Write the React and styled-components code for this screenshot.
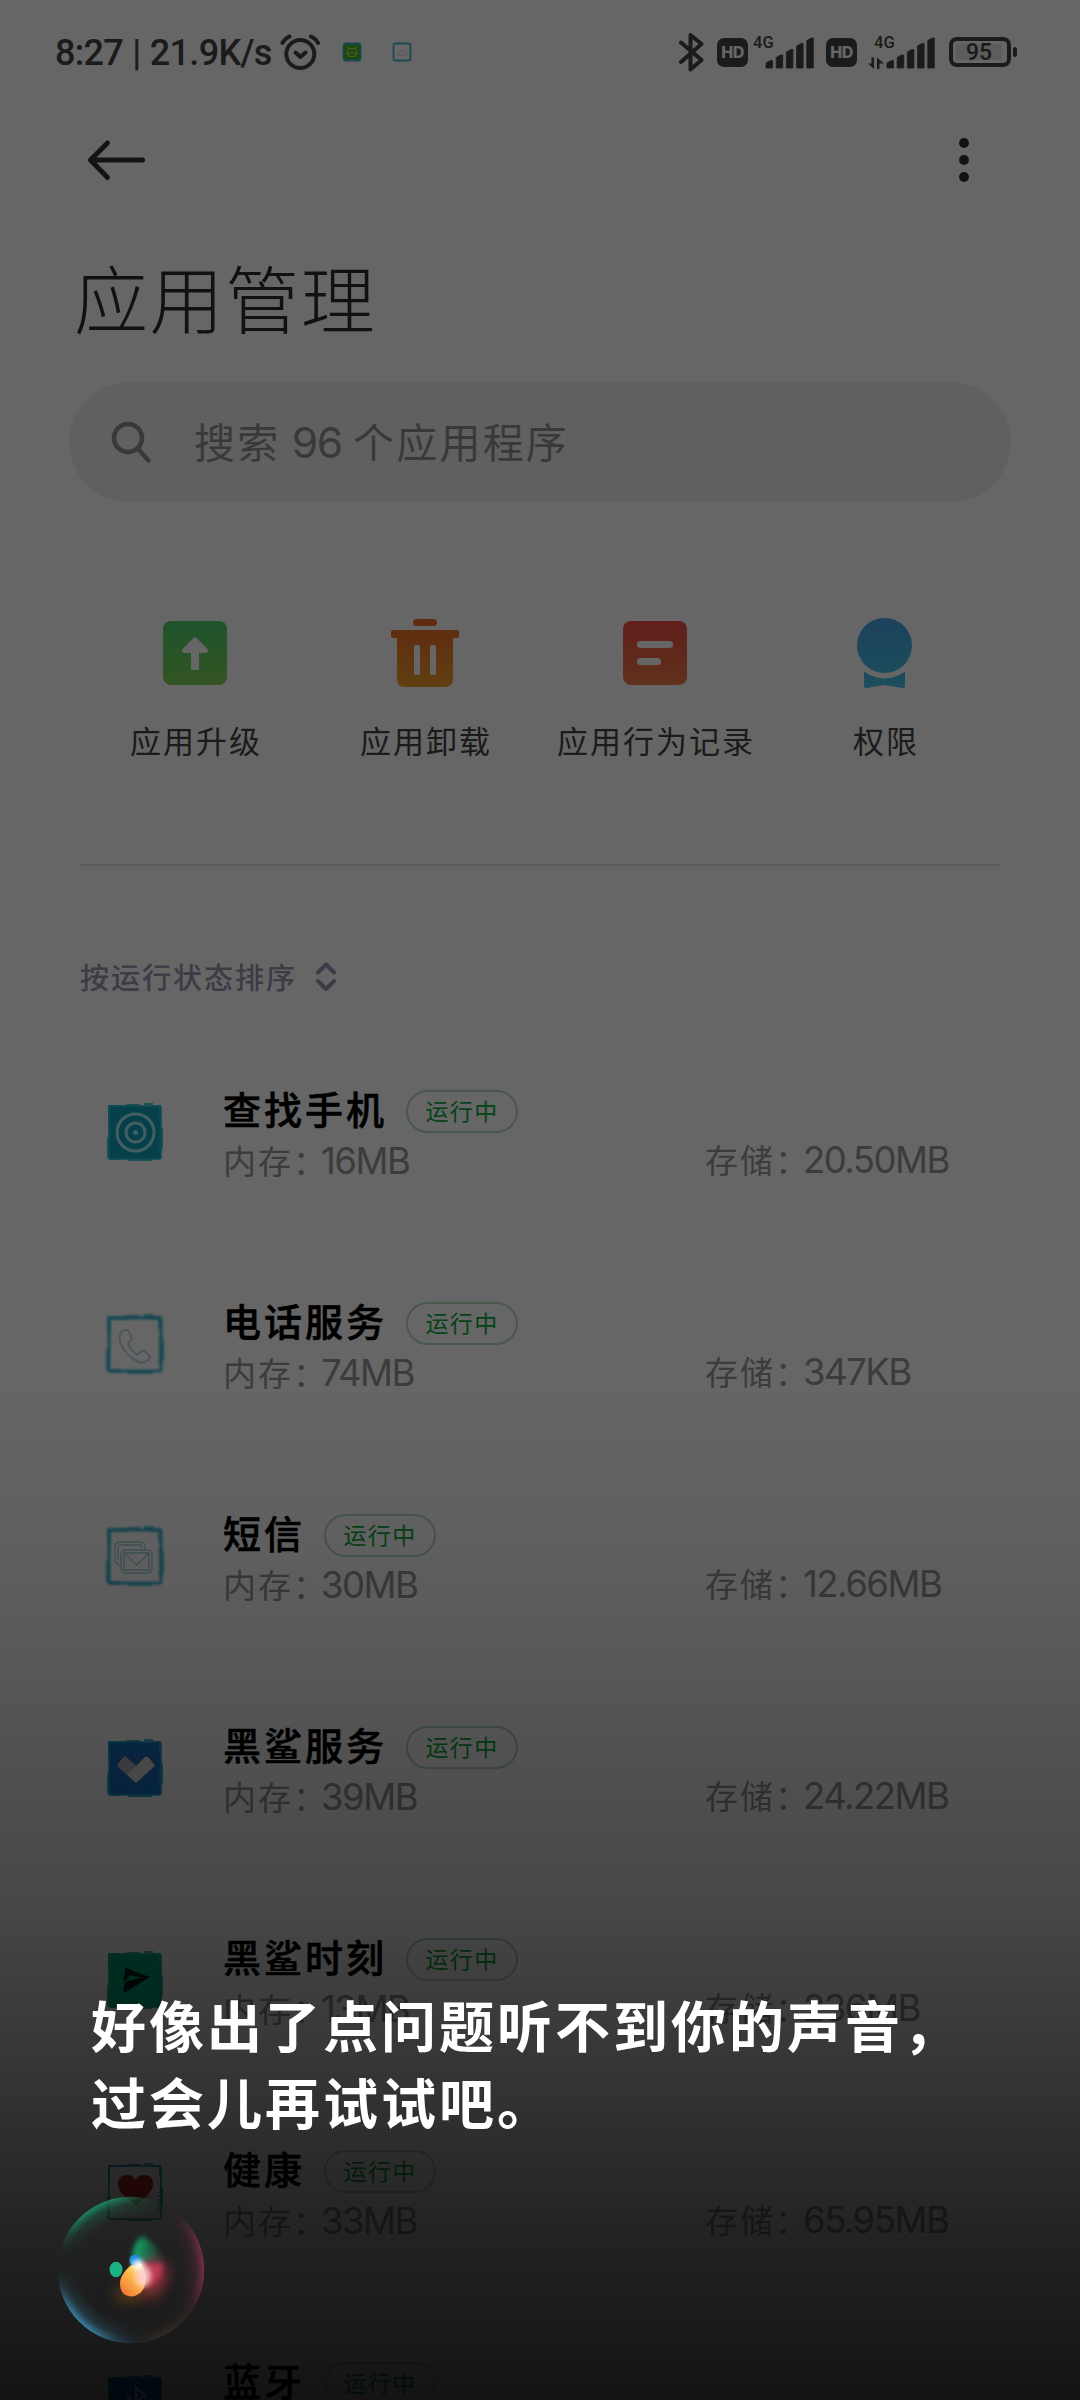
import styled, { createGlobalStyle } from 'styled-components';

const GlobalStyle = createGlobalStyle`
  * {
    box-sizing: border-box;
  }

  body {
    margin: 0;
    background-color: #fff;
    font-family: 'Noto Sans CJK SC', 'Noto Sans', sans-serif;
  }

  svg {
    display: block;
    flex-shrink: 0;
  }
`;

const Screen = styled.div`
  position: relative;
  width: 1080px;
  height: 2400px;
  overflow: hidden;
  background-color: #fff;
`;

const StatusBar = styled.div`
  display: flex;
  align-items: center;
  height: 104px;
  padding: 0 63px 0 55px;
  color: #444;
  font-family: Roboto, sans-serif;
`;

const Clock = styled.div`
  width: 225px;
  padding-top: 1px;
  font-size: 36px;
  font-weight: 500;
  line-height: 40px;
  letter-spacing: -0.7px;
  word-spacing: 1px;
  white-space: nowrap;
`;

const Notices = styled.div`
  display: flex;
  gap: 30px;
  margin-left: 22px;
`;

const StatusRight = styled.div`
  display: flex;
  align-items: center;
  margin-left: auto;
`;

const HdBadge = styled.div`
  width: 31px;
  height: 29px;
  margin: 0 ${p => p.$after}px 0 ${p => p.$before}px;
  border-radius: 7px;
  background-color: #444;
  color: #fff;
  font-family: Inter, sans-serif;
  font-size: 16px;
  font-weight: 800;
  line-height: 29px;
  letter-spacing: -0.5px;
  text-align: center;
`;

const Battery = styled.div`
  display: flex;
  align-items: center;
  margin-left: 13px;
`;

const BatteryBody = styled.div`
  width: 62px;
  height: 30px;
  padding: 3px;
  border: 4px solid #444;
  border-radius: 8px;
`;

const BatteryLevel = styled.div`
  width: 46px;
  height: 16px;
  border-radius: 2px;
  background-color: #e8e8e8;
  font-size: 23px;
  font-weight: 500;
  line-height: 17px;
  text-align: center;
`;

const BatteryTip = styled.div`
  width: 4px;
  height: 10px;
  margin-left: 2px;
  border-radius: 2px;
  background-color: #444;
`;

const Toolbar = styled.div`
  display: flex;
  align-items: center;
  justify-content: space-between;
  height: 114px;
  padding: 0 106px 2px 84px;
`;

const Title = styled.h1`
  margin: 28px 0 0 74px;
  color: #2b2b2b;
  font-size: 74px;
  font-weight: 300;
  line-height: 100px;
  letter-spacing: 1.6px;
`;

const Search = styled.div`
  display: flex;
  align-items: center;
  width: 942px;
  height: 120px;
  margin: 36px 0 0 69px;
  padding-left: 41px;
  border-radius: 60px;
  background-color: #f0f0f0;
  color: #909090;
  font-size: 41px;
  letter-spacing: 2.2px;
  line-height: 50px;
`;

const SearchText = styled.div`
  margin: -1px 0 0 40px;
  white-space: pre;
`;

const Latin = styled.span`
  font-family: Inter, sans-serif;
  font-size: 1.04em;
  letter-spacing: -1.5px;
`;

const Actions = styled.div`
  display: grid;
  grid-template-columns: repeat(4, 230px);
  margin: 115px 80px 0;
`;

const Action = styled.div`
  display: flex;
  flex-direction: column;
  align-items: center;
  gap: 31px;
  color: #454545;
  font-size: 31px;
  line-height: 40px;
  letter-spacing: 2px;
  white-space: nowrap;
`;

const ActionLabel = styled.div`
  padding-left: 2px;
`;

const Divider = styled.div`
  height: 2px;
  margin: 104px 80px 0;
  background-color: #e2e2e2;
`;

const Sort = styled.div`
  display: flex;
  align-items: center;
  gap: 17px;
  margin: 90px 0 30px 80px;
  color: #9496b0;
  font-size: 29px;
  font-weight: 500;
  line-height: 40px;
  letter-spacing: 2px;
`;

const Row = styled.div`
  display: grid;
  grid-template-columns: 117px 482px 1fr;
  align-items: center;
  height: 212px;
  padding-left: 106px;
`;

const Info = styled.div`
  display: flex;
  flex-direction: column;
  gap: 8px;
  padding-top: 4px;
`;

const NameLine = styled.div`
  display: flex;
  align-items: center;
  gap: 19px;
  height: 44px;
`;

const Name = styled.div`
  color: #000;
  font-size: 38px;
  font-weight: 500;
  line-height: 44px;
  letter-spacing: 3px;
  -webkit-text-stroke: 0.6px #000;
`;

const Running = styled.div`
  width: 112px;
  height: 43px;
  margin-top: 8px;
  border: 2px solid #b4dcbc;
  border-radius: 22px;
  color: #10a83c;
  font-size: 23px;
  line-height: 37px;
  letter-spacing: 1.4px;
  text-align: center;
`;

const Stat = styled.div`
  color: #969696;
  font-size: 33px;
  line-height: 44px;
  letter-spacing: 2px;
  white-space: nowrap;
  align-self: ${p => (p.$end ? 'end' : 'auto')};
  padding-bottom: ${p => (p.$end ? '56px' : '0')};
`;

const Value = styled.span`
  margin-left: -7px;
  font-family: Inter, sans-serif;
  font-size: 36.5px;
  letter-spacing: -1.5px;
`;

/* dims the page and fades to near black at the bottom */
const Assistant = styled.div`
  position: absolute;
  inset: 0;
  display: flex;
  flex-direction: column;
  justify-content: flex-end;
  padding: 0 0 50px 51px;
  background:
    linear-gradient(
      rgba(0, 0, 0, 0) 1380px,
      rgba(0, 0, 0, 0.07) 1550px,
      rgba(0, 0, 0, 0.17) 1700px,
      rgba(0, 0, 0, 0.3) 1900px,
      rgba(0, 0, 0, 0.48) 2067px,
      rgba(0, 0, 0, 0.66) 2233px,
      rgba(0, 0, 0, 0.75) 2333px,
      rgba(0, 0, 0, 0.81) 2400px
    ),
    rgba(0, 0, 0, 0.6);
`;

const Reply = styled.div`
  margin: 0 0 51px 40px;
  color: #fff;
  font-size: 55px;
  font-weight: 700;
  line-height: 77px;
  letter-spacing: 3px;
  white-space: pre;
`;

const Alarm = () => (
  <svg width="40" height="40" viewBox="0 0 40 40" fill="none" stroke="#444" strokeWidth="4" strokeLinecap="round">
    <circle cx="20.3" cy="22" r="14" />
    <path d="M2.5 11Q5 6.500 9.500 4.500M38 11Q35.500 6.500 31 4.500" />
    <path d="M15.500 20.500L20.300 25L25.500 20.500" strokeLinejoin="round" />
  </svg>
);

const NoticeIcon = ({ filled }) => (
  <svg width="20" height="20" viewBox="0 0 20 20" fill="none">
    <rect x="1.500" y="1.500" width="17" height="17" rx="2" fill={filled ? '#47b51c' : 'none'} stroke="#3fb6cc" strokeWidth="1.800" />
    {filled ? (
      <g stroke="#e4ffd8" strokeWidth="0.8">
        <rect x="5.500" y="6.500" width="9" height="8" rx="3" />
        <path d="M5.500 11H14.500M7 6.500L6.500 4.800M13 6.500L13.500 4.800M8 9H8.600M11.500 9H12.100" />
      </g>
    ) : (
      <path d="M5.500 13H14.500Q15.500 11 13.500 10.500Q12.500 7 9.500 8Q8 8.500 8 10Q5 10.500 5.500 13Z" stroke="#bcc" strokeWidth="0.7" />
    )}
  </svg>
);

const BluetoothIcon = () => (
  <svg width="25" height="40" viewBox="0 0 25 40" fill="none" stroke="#444" strokeWidth="4" strokeLinecap="round" strokeLinejoin="round">
    <path d="M2 10.500L22.500 28L11.500 37.500V3L22.500 12L2 30" />
  </svg>
);

const Signal = ({ data }) => {
  const start = data ? 19 : 13;
  const width = data ? 68 : 62;

  return (
    <svg width={width} height="36" viewBox={`0 0 ${width} 36`} fill="#444">
      <text x={start - 13} y="13.500" fontSize="16.500" fontWeight="500" fontFamily="Roboto, sans-serif">4G</text>
      {data && <path d="M3.500 23.500H6V35L0 29.500H3.500ZM9 35V23.500L16 29.500H11.500V35Z" />}
      {[8, 13.5, 19, 25, 30.5].map((h, i) => (
        <path
          key={h}
          d={`M${start + i * 10.2} 34V${37 - h}L${start + 4.5 + i * 10.2} ${34.500 - h}H${start + 6.5 + i * 10.2}V34Z`}
          stroke="#444"
          strokeLinejoin="round"
          strokeWidth="0.8"
        />
      ))}
    </svg>
  );
};

const BackIcon = () => (
  <svg width="66" height="44" viewBox="0 0 66 44" fill="none" stroke="#303030" strokeWidth="5" strokeLinecap="round" strokeLinejoin="round">
    <path d="M58.500 22H6.500M23.500 5L6.500 22L23.500 39.500" />
  </svg>
);

const MoreIcon = () => (
  <svg width="20" height="48" viewBox="0 0 20 48" fill="#303030">
    <circle cx="10" cy="7" r="5" />
    <circle cx="10" cy="24" r="5" />
    <circle cx="10" cy="41" r="5" />
  </svg>
);

const SearchIcon = () => (
  <svg width="44" height="44" viewBox="0 0 44 44" fill="none" stroke="#909090" strokeWidth="4.600" strokeLinecap="round">
    <circle cx="18" cy="18" r="14" />
    <path d="M28.500 29.500L38.500 40.500" />
  </svg>
);

const Gradient = ({ id, from, to }) => (
  <linearGradient id={id} x1="0" y1="0" x2="0" y2="72" gradientUnits="userSpaceOnUse">
    <stop offset="0" stopColor={from} />
    <stop offset="1" stopColor={to} />
  </linearGradient>
);

const UpgradeIcon = () => (
  <svg width="72" height="72" viewBox="0 0 72 72">
    <Gradient id="up" from="#48d070" to="#84d454" />
    <rect x="4" y="4" width="64" height="64" rx="8" fill="url(#up)" />
    <path d="M34 21.500Q36 19 38 21.500L48 31.500Q50.500 35.500 46.500 36H40V51.500Q40 53 38.500 53H33.500Q32 53 32 51.500V36H25.500Q21.500 35.500 24 31.500Z" fill="#fff" />
  </svg>
);

const TrashIcon = () => (
  <svg width="72" height="72" viewBox="0 0 72 72">
    <Gradient id="trash" from="#f06828" to="#f0a030" />
    <g fill="url(#trash)">
      <rect x="24" y="2" width="24" height="7" rx="3.500" />
      <path d="M4 13H68Q70 13 70 15V19Q70 21 68 21H64V62Q64 70 56 70H16Q8 70 8 62V21H4Q2 21 2 19V15Q2 13 4 13Z" />
    </g>
    <rect x="25" y="28" width="6" height="30" rx="2" fill="#fff" />
    <rect x="41" y="28" width="6" height="30" rx="2" fill="#fff" />
  </svg>
);

const RecordIcon = () => (
  <svg width="72" height="72" viewBox="0 0 72 72">
    <Gradient id="record" from="#f04848" to="#f08048" />
    <rect x="4" y="4" width="64" height="64" rx="8" fill="url(#record)" />
    <rect x="18" y="24" width="36" height="7" rx="3.500" fill="#fff" />
    <rect x="18" y="41" width="24" height="7" rx="3.500" fill="#fff" />
  </svg>
);

const PermissionIcon = () => (
  <svg width="72" height="72" viewBox="0 0 72 72">
    <Gradient id="perm" from="#46a4e8" to="#46c4e4" />
    <g fill="url(#perm)">
      <circle cx="35.500" cy="28.500" r="27.500" />
      <path d="M15 54.500Q35.500 68.500 56 54.500V69Q56 71.500 53.500 71L35.500 68L17.500 71Q15 71.500 15 69Z" />
    </g>
  </svg>
);

const SortIcon = () => (
  <svg width="24" height="32" viewBox="0 0 24 32" fill="none" stroke="#9496b0" strokeWidth="4" strokeLinecap="round" strokeLinejoin="round">
    <path d="M4 12.500L12 4.500L20 12.500M4 21L12 29L20 21" />
  </svg>
);

const glyphs = {
  find: (
    <g fill="none" stroke="#a8ecf0" strokeWidth="3">
      <circle cx="29.500" cy="29.500" r="18.500" />
      <circle cx="29.500" cy="29.500" r="9.500" />
      <circle cx="29.500" cy="29.500" r="1.500" fill="#a8ecf0" strokeWidth="2" />
    </g>
  ),
  phone: (
    <path
      d="M14 20Q15 15 20 15Q22 15 23 17L26 23Q26 25 24 26Q21 28 23 31Q26 36 30 39Q33 40 34 37Q35 35 38 36L43 40Q45 42 43 44Q39 49 33 47Q20 42 14 27Q13 23 14 20Z"
      fill="none" stroke="#b8d8e4" strokeWidth="2"
    />
  ),
  sms: (
    <g fill="none" stroke="#a4d0e0" strokeWidth="1.400">
      <path d="M14 38Q9 37 9 33V20Q9 15 14 15H34Q39 15 39 20V22M12 33V21Q12 18 15 18H33Q36 18 36 21" />
      <rect x="15" y="23" width="31" height="23" rx="4" />
      <path d="M18 26H43V43H18ZM18 26L30.500 38L43 26" />
    </g>
  ),
  shark: (
    <g>
      <path d="M21 13L30 21L39 13L52 26L30 48L8 26Z" fill="#2b6cb4" />
      <path d="M20 18L30 27L39 18Q40.500 17 42 18L48 25Q49 26.500 48 27.500L30 44L12 27.500Q11 26.500 12 25L18 18Q19 17 20 18Z" fill="#e4e4e4" />
      <path d="M20 18L30 27L21 35.500L12 27.500Q11 26.500 12 25L18 18Q19 17 20 18Z" fill="#b4bccc" />
    </g>
  ),
  moment: (
    <path d="M19.500 16.500Q32 22 44 26Q32 34 18 42L17.500 38Q17 32 22 30Q30 28 36 26Q28 26 25 24Q21 26 20 30H17.500Z" fill="#062018" />
  ),
  health: (
    <g>
      <path d="M12 36Q18 28 30 33Q40 28 47 35Q46 46 36 44Q30 40 24 44Q14 45 12 36Z" fill="#f0b0b0" opacity="0.35" />
      <path d="M29.500 42Q12 30 12 21Q12 12 21 12Q27 12 29.500 17Q32 12 38 12Q47 12 47 21Q47 30 29.500 42Z" fill="#c82424" />
    </g>
  ),
  bluetooth: (
    <path d="M20 21L39 36L30 43V13L39 20L20 35" fill="none" stroke="#d8e4f4" strokeWidth="2.200" />
  ),
};

const AppIcon = ({ glyph, fill, frame, glow }) => (
  <svg width="58" height="58" viewBox="0 0 58 58" overflow="visible">
    <filter id={`glow-${glyph}`} x="-20%" y="-20%" width="140%" height="140%">
      <feGaussianBlur stdDeviation={glow ? 1.1 : 0.4} />
    </filter>
    <rect x="3" y="3" width="52" height="53" rx="2" fill={fill} />
    <g filter={`url(#glow-${glyph})`} fill="none" stroke={frame}>
      <rect x="3" y="3" width="52" height="53" rx="2" strokeWidth={glow ? 3 : 1.6} />
      <path
        d="M3 18V3H20L22 2H34M38 1H46V3H54V14M54 22L56 26V44L54 48M2 34V54L4 56H14M22 57H46"
        strokeWidth={glow ? 4 : 2}
        opacity="0.85"
      />
      <path d="M52.500 30L56 27M52.500 34L56 31M52.500 38L56 35M52.500 42L56 39M52.500 46L56 43" strokeWidth="1.200" />
    </g>
    {glyphs[glyph]}
  </svg>
);

const Orb = () => (
  <svg width="160" height="160" viewBox="0 0 160 160">
    <defs>
      <radialGradient id="rim">
        <stop offset="0.7" stopColor="#fff" stopOpacity="0" />
        <stop offset="0.88" stopColor="#fff" stopOpacity="0.26" />
        <stop offset="1" stopColor="#fff" stopOpacity="0.9" />
      </radialGradient>
      <mask id="rimMask">
        <circle cx="80" cy="80" r="73.300" fill="url(#rim)" />
      </mask>
      <clipPath id="ball">
        <circle cx="80" cy="80" r="73.300" />
      </clipPath>
      <filter id="soft20" x="-100%" y="-100%" width="300%" height="300%">
        <feGaussianBlur stdDeviation="14" />
      </filter>
      <filter id="soft7" x="-100%" y="-100%" width="300%" height="300%">
        <feGaussianBlur stdDeviation="7" />
      </filter>
      <filter id="soft3" x="-100%" y="-100%" width="300%" height="300%">
        <feGaussianBlur stdDeviation="2.500" />
      </filter>
      <filter id="soft1" x="-100%" y="-100%" width="300%" height="300%">
        <feGaussianBlur stdDeviation="0.700" />
      </filter>
      <linearGradient id="drop" x1="1" y1="0" x2="0.200" y2="1">
        <stop offset="0" stopColor="#fff090" />
        <stop offset="0.5" stopColor="#fcb848" />
        <stop offset="1" stopColor="#f07838" />
      </linearGradient>
      <linearGradient id="greenRight" x1="0" y1="0" x2="1" y2="0">
        <stop offset="0" stopColor="#14b070" />
        <stop offset="1" stopColor="#14b070" stopOpacity="0" />
      </linearGradient>
    </defs>
    <circle cx="80" cy="80" r="73.300" fill="#202020" opacity="0.25" />
    <g mask="url(#rimMask)">
      <g filter="url(#soft20)">
        <ellipse cx="42" cy="16" rx="46" ry="32" fill="#1c9468" />
        <ellipse cx="26" cy="134" rx="44" ry="34" fill="#3c90b4" />
        <ellipse cx="154" cy="70" rx="26" ry="46" fill="#843048" />
        <ellipse cx="124" cy="148" rx="36" ry="18" fill="#40342c" />
      </g>
    </g>
    <g clipPath="url(#ball)">
      <path d="M82 74Q80 52 92 46Q110 58 114 72Z" fill="url(#greenRight)" filter="url(#soft3)" />
      <ellipse cx="102" cy="84" rx="14" ry="14" fill="#c83450" opacity="0.75" filter="url(#soft7)" />
      <ellipse cx="96" cy="100" rx="16" ry="8" fill="#c04838" opacity="0.5" filter="url(#soft7)" />
      <ellipse cx="76" cy="104" rx="12" ry="7" fill="#a06818" opacity="0.5" filter="url(#soft7)" />
      <path d="M88 73H112Q112 88 100 96H88Z" fill="#d84464" opacity="0.65" filter="url(#soft3)" />
    </g>
    <ellipse cx="65" cy="79.500" rx="6.500" ry="7.800" fill="#1cb484" filter="url(#soft1)" />
    <path d="M69 93Q69 87 75 80Q82 72 90 74Q98 86 93 98Q88 106.500 80 106.500Q69 105.500 69 93Z" fill="url(#drop)" filter="url(#soft1)" />
    <ellipse cx="84" cy="70" rx="5.500" ry="5.500" fill="#1888dc" filter="url(#soft1)" />
    <ellipse cx="92" cy="86" rx="8" ry="11" fill="#ffd0d4" opacity="0.85" filter="url(#soft3)" />
    <ellipse cx="87" cy="74.500" rx="6" ry="4.500" fill="#fff" filter="url(#soft3)" />
  </svg>
);

const actions = [
  { label: '应用升级', Icon: UpgradeIcon },
  { label: '应用卸载', Icon: TrashIcon },
  { label: '应用行为记录', Icon: RecordIcon },
  { label: '权限', Icon: PermissionIcon },
];

const apps = [
  { name: '查找手机', memory: '16MB', storage: '20.50MB', glyph: 'find', fill: '#10a0b8', frame: '#24bccc' },
  { name: '电话服务', memory: '74MB', storage: '347KB', glyph: 'phone', fill: 'none', frame: '#38b4cc', glow: true },
  { name: '短信', memory: '30MB', storage: '12.66MB', glyph: 'sms', fill: 'none', frame: '#38b4cc', glow: true },
  { name: '黑鲨服务', memory: '39MB', storage: '24.22MB', glyph: 'shark', fill: '#1470c8', frame: '#20a4c4' },
  { name: '黑鲨时刻', memory: '13MB', storage: '236MB', glyph: 'moment', fill: '#00b080', frame: '#18a8a0' },
  { name: '健康', memory: '33MB', storage: '65.95MB', glyph: 'health', fill: 'none', frame: '#20a0ac' },
  { name: '蓝牙', memory: '12MB', storage: '8.20MB', glyph: 'bluetooth', fill: '#1464c0', frame: '#1c90a8' },
];

function App() {
  return (
    <Screen>
      <GlobalStyle />
      <StatusBar>
        <Clock>8:27 | 21.9K/s</Clock>
        <Alarm />
        <Notices>
          <NoticeIcon filled />
          <NoticeIcon />
        </Notices>
        <StatusRight>
          <BluetoothIcon />
          <HdBadge $before={13} $after={5}>HD</HdBadge>
          <Signal />
          <HdBadge $before={11} $after={11}>HD</HdBadge>
          <Signal data />
          <Battery>
            <BatteryBody>
              <BatteryLevel>95</BatteryLevel>
            </BatteryBody>
            <BatteryTip />
          </Battery>
        </StatusRight>
      </StatusBar>
      <Toolbar>
        <BackIcon />
        <MoreIcon />
      </Toolbar>
      <Title>应用管理</Title>
      <Search>
        <SearchIcon />
        <SearchText>搜索 <Latin>96</Latin> 个应用程序</SearchText>
      </Search>
      <Actions>
        {actions.map(({ label, Icon }) => (
          <Action key={label}>
            <Icon />
            <ActionLabel>{label}</ActionLabel>
          </Action>
        ))}
      </Actions>
      <Divider />
      <Sort>
        按运行状态排序
        <SortIcon />
      </Sort>
      {apps.map(app => (
        <Row key={app.name}>
          <AppIcon glyph={app.glyph} fill={app.fill} frame={app.frame} glow={app.glow} />
          <Info>
            <NameLine>
              <Name>{app.name}</Name>
              <Running>运行中</Running>
            </NameLine>
            <Stat>内存：<Value>{app.memory}</Value></Stat>
          </Info>
          <Stat $end>存储：<Value>{app.storage}</Value></Stat>
        </Row>
      ))}
      <Assistant>
        <Reply>{'好像出了点问题听不到你的声音，\n过会儿再试试吧。'}</Reply>
        <Orb />
      </Assistant>
    </Screen>
  );
}

export default App;
